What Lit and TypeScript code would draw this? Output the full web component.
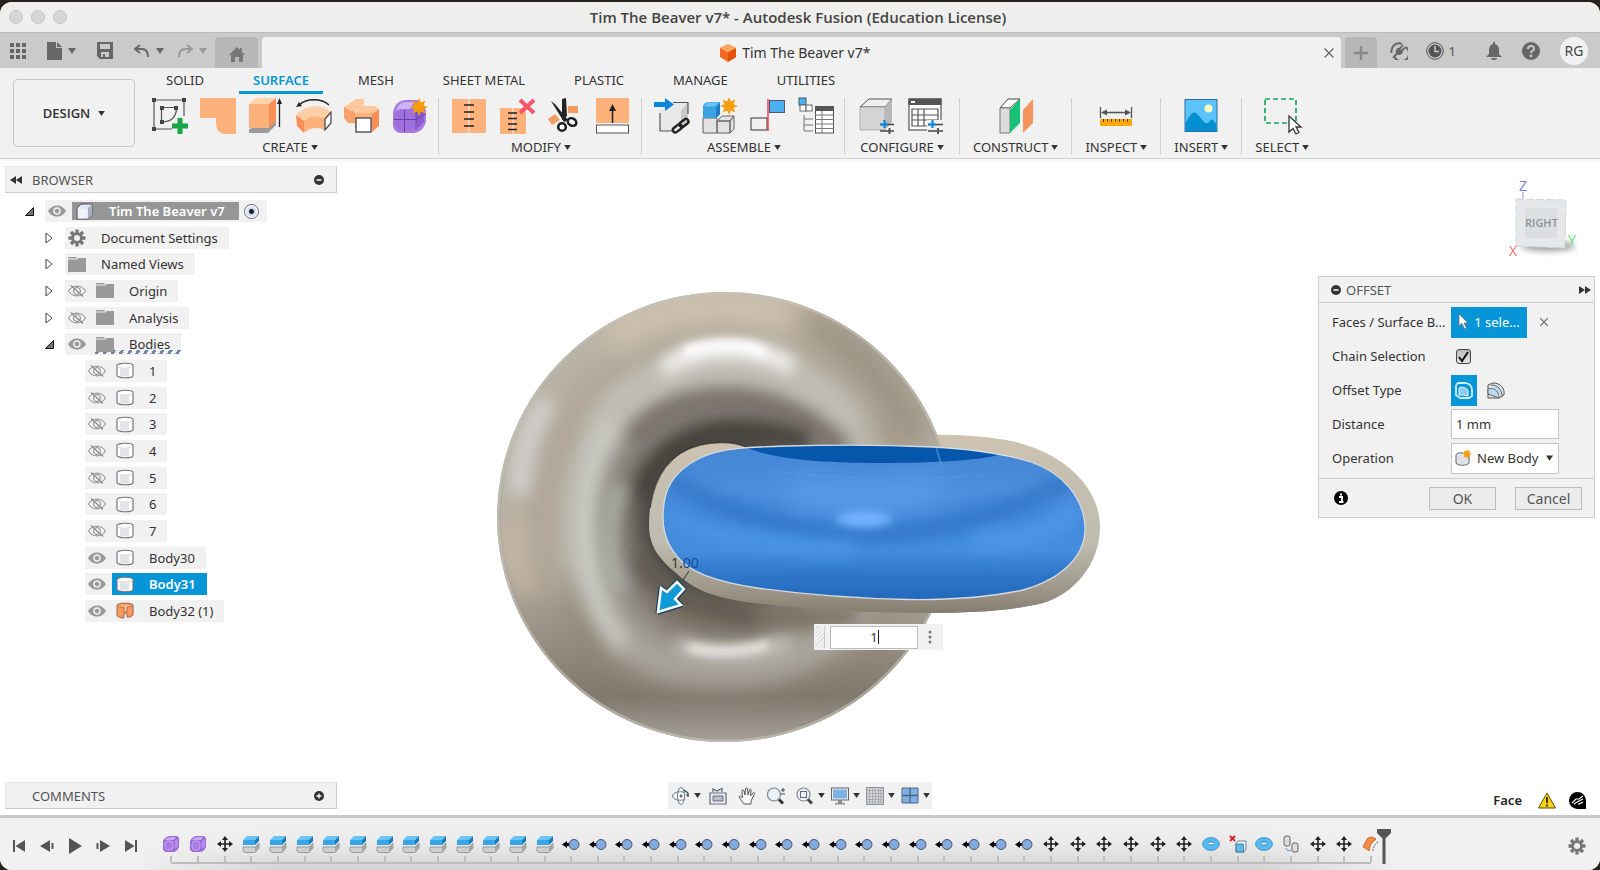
import { LitElement, html, css, nothing, type TemplateResult } from "lit";
import { customElement, property, state } from "lit/decorators.js";
import { classMap } from "lit/directives/class-map.js";

const caret = html`<svg class="caret" viewBox="0 0 8 6" width="8" height="6" aria-hidden="true"><path d="M0 0H8L4 6Z" fill="currentColor" /></svg>`;

/* ---------- ribbon icons, 36 x 36 ---------- */
const star = "M0-9 1.8-4.4 6.4-6.4 4.4-1.8 9 0 4.4 1.8 6.4 6.4 1.8 4.4 0 9-1.8 4.4-6.4 6.4-4.4 1.8-9 0-4.4-1.8-6.4-6.4-1.8-4.4Z";

const ribbonIcons: Record<string, TemplateResult> = {
  sketch: html`<svg viewBox="0 0 36 36"><g fill="none" stroke="#555" stroke-width="1.2"><path d="M4 2H30M2 4V29M4 31H20M32 4V18M12 9.500H23M9.500 12V22M12 24C20 23 24 19 24.500 11" /></g><g fill="#444"><path d="M0 0h4v4H0zM30 0h4v4h-4zM0 29h4v4H0zM8 8h4v4H8zM22 8h4v4h-4zM8 22h4v4H8z" /></g><path d="M25.500 20h5v5.500H36v5H30.500V36h-5V30.500H20v-5h5.500z" fill="#17a546" /></svg>`,
  patch: html`<svg viewBox="0 0 36 36"><path d="M0 0H36V36H26C19 36 16 31 16 25V20H0Z" fill="#fdb27c" /></svg>`,
  extrude: html`<svg viewBox="0 0 36 36"><path d="M1 31 1 35H20L28 27V23Z" fill="#9a9a9a" /><path d="M1 6 8 0H28L21 6Z" fill="#ffd3b0" /><path d="M1 6H21V30H1Z" fill="#fdb27c" /><path d="M21 6 28 0V23L21 30Z" fill="#f98f57" /><path d="M31.500 5V29" stroke="#222" stroke-width="1.300" /><path d="M31.500 0 34 6H29Z" fill="#222" /></svg>`,
  revolve: html`<svg viewBox="0 0 36 36"><path d="M3 7C11 0 25 0 33 7" fill="none" stroke="#222" stroke-width="1.400" /><path d="M0 9 3 4 6 8Z" fill="#222" /><path d="M0 17C10 6 26 6 35 14L29 21C22 17 13 17 8 23Z" fill="#ffcfa6" /><path d="M0 17 8 23V35L1 28Z" fill="#f98f57" /><path d="M8 23C13 17 22 17 29 21V32C21 29 14 29 8 35Z" fill="#fdb27c" /><path d="M29 21 35 14V25L29 32Z" fill="#fff" stroke="#444" stroke-width="1.200" /></svg>`,
  sweep: html`<svg viewBox="0 0 36 36"><path d="M0 9 7 9 11 14V25H4L0 20Z" fill="#f9a16a" /><path d="M0 9 12 1H20V7L12 13H6Z" fill="#ffc79c" /><path d="M12 14 18 8H31L35 11 28 16H12Z" fill="#ffc79c" /><path d="M11 15H28V30H11Z" fill="#fdb27c" /><path d="M28 16 35 11V28L28 34Z" fill="#f98f57" /><rect x="12" y="20" width="15" height="14" fill="#fff" stroke="#444" stroke-width="1.300" /></svg>`,
  form: html`<svg viewBox="0 0 36 36"><path d="M1 15C2 7 7 2 14 2H24C30 3 34 9 34 15V23C33 30 27 35 22 35H8C3 34 1 31 1 26Z" fill="#a77ae0" /><path d="M4 13C6 7 9 4 14 4H22L18 11H8Z" fill="#cfb1f5" /><path d="M23 13 32 10V24L25 31Z" fill="#8a5cd0" /><rect x="3" y="12" width="20" height="20" rx="5" fill="#9d70dc" /><path d="M12.500 12V34M2 21.500H24L34 16M24 13V32" stroke="#6b3fae" stroke-width="1" fill="none" /><path d="${star}" transform="translate(27 9)" fill="#f79d0a" /></svg>`,
  stitch: html`<svg viewBox="0 0 36 36"><path d="M1 1H17.500V35H1zM18.500 1H35V35H18.500z" fill="#fdb27c" /><path d="M13 7H23M13 14H23M13 21H23M13 28H23" stroke="#222" stroke-width="1.600" /></svg>`,
  unstitch: html`<svg viewBox="0 0 36 36"><path d="M1 10H13.500V36H1zM14.500 10H27V36H14.500z" fill="#fdb27c" /><path d="M9 15H18M9 20.500H18M9 26H18M9 31.500H18" stroke="#222" stroke-width="1.600" /><path d="M21 2 35 15M35 2 21 15" stroke="#f5566a" stroke-width="4" /></svg>`,
  trim: html`<svg viewBox="0 0 36 36"><path d="M21 8H31V15H21zM1 21 8 16 13 22 5 27Z" fill="#f49a63" /><path d="M4 3 8 6 21 22 17 24ZM15 1 19 0 20 18 15 22Z" fill="#222" /><circle cx="15" cy="29" r="3.800" fill="#fff" stroke="#222" stroke-width="2.600" /><ellipse cx="25" cy="24" rx="4.500" ry="3.500" fill="#fff" stroke="#222" stroke-width="2.600" transform="rotate(30 25 24)" /></svg>`,
  extend: html`<svg viewBox="0 0 36 36"><rect x="1" y="0" width="33" height="25" fill="#fdb27c" /><rect x="1.500" y="27" width="32" height="8" fill="#fff" stroke="#555" /><path d="M17.500 10V25" stroke="#222" stroke-width="1.500" /><path d="M17.500 6 21 13H14Z" fill="#222" /></svg>`,
  derive: html`<svg viewBox="0 0 36 36"><path d="M6 13 15 4H34V24L27 33H6Z" fill="#e9e9e9" /><path d="M27 13 34 4V24L27 33Z" fill="#c9c9c9" /><path d="M6 15V33H18M19 4.500H34V16" fill="none" stroke="#555" stroke-width="1.200" /><path d="M0 4H11V0L20 6.500 11 13V9H0Z" fill="#0a86dd" /><g fill="none" stroke="#222" stroke-width="2.400"><rect x="18" y="28" width="10" height="5" rx="2.500" transform="rotate(-38 23 30)" /><rect x="25" y="22.500" width="10" height="5" rx="2.500" transform="rotate(-38 30 25)" /></g></svg>`,
  component: html`<svg viewBox="0 0 36 36"><path d="M1 20H15V35H1zM15 23H28V35H15zM15 23 20 18H32L28 23ZM28 23 32 18V31L28 35Z" fill="#e2e2e2" stroke="#666" stroke-width="1" /><path d="M1 8C2 5 4 4 7 4H18V16L14 20H1Z" fill="#3ba2e2" /><path d="M2 8C4 5 5 4.500 8 4.500H17L13 8.500H2Z" fill="#6cc0f2" /><path d="M14 9 18 5V16L14 20Z" fill="#1b7fc4" /><path d="${star}" transform="translate(27 8)" fill="#f79d0a" /></svg>`,
  joint: html`<svg viewBox="0 0 36 36"><rect x="1" y="20" width="16" height="12" fill="none" stroke="#555" stroke-width="1.200" /><rect x="19.500" y="2.500" width="15" height="12" fill="#4bb0ee" stroke="#557" /><path d="M18 1V33" stroke="#e43a4a" stroke-width="1.400" /></svg>`,
  bom: html`<svg viewBox="0 0 36 36"><rect x="1" y="0" width="7" height="7" fill="#4bb0ee" stroke="#456" /><rect x="2" y="7" width="6" height="6" fill="#fff" stroke="#666" /><rect x="8" y="7" width="6" height="6" fill="#fff" stroke="#666" /><path d="M6 17V33M6 21H15M6 27H15M6 33H15" stroke="#777" fill="none" /><rect x="17.500" y="9" width="18" height="26" fill="#fff" stroke="#555" /><path d="M17 8H36V13H17z" fill="#555" /><path d="M17 17H36M17 21.500H36M17 26H36M17 30.500H36M24 13V35" stroke="#777" /></svg>`,
  configure: html`<svg viewBox="0 0 36 36"><path d="M0 9 9 1H32L25 9Z" fill="#efefef" stroke="#555" /><path d="M0 9H25V32H0Z" fill="#d5d5d5" stroke="#888" stroke-width=".6" /><path d="M25 9 32 1V24L25 32Z" fill="#b9b9b9" /><path d="M20 26.500H34M20 33H34" stroke="#444" stroke-width="1.600" /><path d="M24.500 22V30M20 26.500H28" stroke="#0a86dd" stroke-width="2.200" /><path d="M29.500 30V36" stroke="#555" stroke-width="2" /></svg>`,
  table: html`<svg viewBox="0 0 36 36"><rect x="1" y="1" width="32" height="31" fill="#fff" stroke="#555" stroke-width="1.200" /><path d="M.500.500H33.500V7H.500z" fill="#555" /><path d="M3 3H7V5H3z" fill="#fff" /><path d="M4 11H30V28H4zM4 17H30M4 22H30M10 11V28M16 11V28" fill="none" stroke="#555" stroke-width="1.200" /><path d="M19 22H36V36H19z" fill="#f1f1f1" /><path d="M20 26.500H35M20 33H35" stroke="#444" stroke-width="1.600" /><path d="M24.500 22V30M20 26.500H28" stroke="#0a86dd" stroke-width="2.200" /><path d="M30 30V36" stroke="#555" stroke-width="2" /></svg>`,
  plane: html`<svg viewBox="0 0 36 36"><path d="M2 10 10 1H22L12 10Z" fill="#fff" stroke="#444" /><path d="M2 10H12V35H2Z" fill="#dcdcdc" stroke="#777" /><path d="M12 12 22 1V25L12 35Z" fill="#16c275" /><path d="M25 12 35 1V25L25 35Z" fill="#f4945a" /></svg>`,
  measure: html`<svg viewBox="0 0 36 36"><path d="M2.500 9V20M33.500 9V20M5 14.500H31" stroke="#555" stroke-width="1.300" /><path d="M3 14.500 9 11.500V17.500ZM33 14.500 27 11.500V17.500Z" fill="#555" /><rect x="2" y="21" width="32" height="7" fill="#fba70c" /><path d="M5.500 21V24M9.500 21V23.500M13.500 21V24M17.500 21V23.500M21.500 21V24M25.500 21V23.500M29.500 21V24" stroke="#5b3b00" /></svg>`,
  insert: html`<svg viewBox="0 0 36 36"><rect x="2" y="1.500" width="32" height="32" fill="#5cc3fa" stroke="#2a6fa0" /><path d="M2.500 25C7 17 10 13 13 15 17 18 20 24 23 25 27 26 27 20 30 22L33.500 26V33H2.500Z" fill="#0290d2" /><circle cx="25.500" cy="10.500" r="4" fill="#fdf7c0" /></svg>`,
  select: html`<svg viewBox="0 0 36 36"><rect x="1" y="1" width="31" height="24" fill="none" stroke="#17a558" stroke-width="1.700" stroke-dasharray="5 3" /><path d="M25 18V34L29 30.500 32 36 35 34.500 32 29H37Z" fill="#fff" stroke="#333" stroke-width="1.300" /></svg>`,
};

const ribbonGroups = [
  { label: "CREATE", icons: ["sketch", "patch", "extrude", "revolve", "sweep", "form"] },
  { label: "MODIFY", icons: ["stitch", "unstitch", "trim", "extend"] },
  { label: "ASSEMBLE", icons: ["derive", "component", "joint", "bom"] },
  { label: "CONFIGURE", icons: ["configure", "table"] },
  { label: "CONSTRUCT", icons: ["plane"] },
  { label: "INSPECT", icons: ["measure"] },
  { label: "INSERT", icons: ["insert"] },
  { label: "SELECT", icons: ["select"] },
];
const workspaceTabs = ["SOLID", "SURFACE", "MESH", "SHEET METAL", "PLASTIC", "MANAGE", "UTILITIES"];

/* ---------- small shared icons ---------- */
const eyeIcon = html`<svg viewBox="0 0 18 12" width="18" height="12"><path d="M0 6C4-1.500 14-1.500 18 6 14 13.500 4 13.500 0 6Z" fill="#999" /><circle cx="9" cy="6" r="3" fill="none" stroke="#f1f1f1" stroke-width="1.500" /></svg>`;
const hiddenIcon = html`<svg viewBox="0 0 18 12" width="18" height="12"><g fill="none" stroke="#888"><path d="M.500 6C4-.500 14-.500 17.500 6 14 12.500 4 12.500.500 6Z" /><circle cx="9" cy="6" r="3.500" /><path d="M3 .500 15 11.500" stroke-width="1.200" /></g></svg>`;
const gearIcon = html`<svg viewBox="-9 -9 18 18" width="18" height="18"><g fill="#777"><circle r="5.800" /><path d="M-1.700-8.500H1.700V8.500H-1.700zM-8.500-1.700V1.700H8.500V-1.700z" /><path d="M-1.700-8.500H1.700V8.500H-1.700zM-8.500-1.700V1.700H8.500V-1.700z" transform="rotate(45)" /></g><circle r="3" fill="#f1f1f1" /></svg>`;
const folderIcon = html`<svg viewBox="0 0 18 15" width="18" height="15"><path d="M0 0H8L9.500 1.500H0zM0 2.500H9L11 1H18V15H0Z" fill="#999" /></svg>`;
const bodyIcon = html`<svg viewBox="0 0 18 17" width="18" height="17"><path d="M1 3.500C1 .500 17 .500 17 3.500V13.500C17 16.500 1 16.500 1 13.500Z" fill="#fff" stroke="#777" stroke-width="1.200" /><path d="M4 6H13V14.500H6C4 14 4 13 4 12Z" fill="#e3e4e8" /><path d="M1.500 4.500C4 6.500 14 6.500 16.500 4.500" fill="none" stroke="#ddd" /></svg>`;
const surfaceIcon = html`<svg viewBox="0 0 18 17" width="18" height="17"><path d="M1 3C1 .500 17 .500 17 3V13C15 15 13 15.500 11 15V11H8V16C5 16 2 15 1 13.500Z" fill="#fa9a63" stroke="#a9603a" /><path d="M2 3.500C5 6 8 5 8 5V10H11V5C13 5 15 4.500 16 3.500" fill="#ffc8a0" stroke="#a9603a" stroke-width=".8" /></svg>`;
const cubeIcon = html`<svg viewBox="0 0 17 17" width="17" height="17"><path d="M1 5 5 1H16V12L12 16H1Z" fill="#dfe5f2" stroke="#555" stroke-width="1" stroke-linejoin="round" /><path d="M12 5 16 1V12L12 16Z" fill="#aab0c0" /><path d="M2 5.500H11.500V15.500H2z" fill="#eef2fb" /></svg>`;
const closedArrow = html`<svg viewBox="0 0 8 12" width="8" height="12"><path d="M1 1V11L7 6Z" fill="#fff" stroke="#444" stroke-linejoin="round" /></svg>`;
const openArrow = html`<svg viewBox="0 0 9 9" width="9" height="9"><path d="M8.500.500V8.500H.500Z" fill="#777" stroke="#111" stroke-linejoin="round" /></svg>`;

/* ---------- timeline icons ---------- */
const timelineIcons: Record<string, TemplateResult> = {
  form: html`<svg viewBox="0 0 18 18" width="18" height="18"><path d="M1 6C3 2 6 1 9 1H15C17 2 17.500 4 17 7V12C16 15 13 17 11 17H4C1 16 .500 14 1 11Z" fill="#9a6cd8" /><path d="M3 5C5 2 8 2 14 2L12 5Z" fill="#c9a9f2" /><rect x="3" y="6" width="8" height="9" rx="3" fill="#a77ae6" stroke="#c9a9f2" /><path d="M13 6 16 4V11L13 14Z" fill="#b58fea" /></svg>`,
  move: html`<svg viewBox="0 0 18 18" width="18" height="18"><path d="M9 3V15M3 9H15" stroke="#222" stroke-width="1.600" /><path d="M9 1 12 5H6zM9 17 12 13H6zM1 9 5 6V12zM17 9 13 6V12z" fill="#222" /></svg>`,
  extrude: html`<svg viewBox="0 0 18 18" width="18" height="18"><path d="M1 5 5 1H17L13 5Z" fill="#6cc4f5" /><path d="M1 5H13V10H1z" fill="#38a6e6" /><path d="M13 5 17 1V6L13 10Z" fill="#1779b8" /><path d="M1 12H13L17 8V13L13 17.500H3L1 16Z" fill="#cfcfcf" stroke="#8a8a8a" stroke-width=".8" /><path d="M13 12 17 8V13L13 17.500Z" fill="#a5a5a5" /></svg>`,
  joint: html`<svg viewBox="0 0 18 18" width="18" height="18"><path d="M0 9.500 5 6V8H9V11H5V13Z" fill="#000" /><circle cx="12" cy="9.500" r="5" fill="#82abe0" stroke="#445" stroke-width=".9" /></svg>`,
  torus: html`<svg viewBox="0 0 18 18" width="18" height="18"><ellipse cx="9" cy="9" rx="8.400" ry="6.400" fill="#55b9f2" stroke="#2f88c4" stroke-width=".8" /><ellipse cx="9" cy="8.500" rx="3.200" ry="1.600" fill="#fff" stroke="#2f88c4" /></svg>`,
  remove: html`<svg viewBox="0 0 18 18" width="18" height="18"><path d="M7 8 9 6H17V14L15 17H7Z" fill="#e5f4fb" stroke="#4b6b7c" stroke-width=".8" /><path d="M7 9H14.500V17H7z" fill="#5bb9ec" stroke="#4b6b7c" stroke-width=".8" /><path d="M1 1 6 6M6 1 1 6" stroke="#d8232a" stroke-width="2" /></svg>`,
  copy: html`<svg viewBox="0 0 18 18" width="18" height="18"><rect x="2" y="1" width="6" height="10" rx="2" fill="#ddd" stroke="#666" /><rect x="10" y="8" width="6" height="9" rx="2" fill="#ddd" stroke="#666" /><path d="M4 13C5 16 7 16 9 15" fill="none" stroke="#4b88d0" /></svg>`,
  offset: html`<svg viewBox="0 0 18 18" width="18" height="18"><path d="M1 12 5 4C8 1 11 2 14 4L10 8C8 10 8 12 7 16 5 14 3 13 1 12Z" fill="#f58b45" stroke="#b85d21" stroke-width=".8" /><path d="M11 16C11 12 13 9 17 6" stroke="#888" fill="none" stroke-width="1.200" stroke-dasharray="2 1" /></svg>`,
};
const repeat = (kind: string, count: number) => Array<string>(count).fill(kind);
const features = [
  ...repeat("form", 2), "move", ...repeat("extrude", 12), ...repeat("joint", 18), ...repeat("move", 6),
  "torus", "remove", "torus", "copy", "move", "move", "offset",
];

const resets = css`
  * { box-sizing: border-box; }
  button, input, select { font: inherit; color: inherit; margin: 0; padding: 0; border: 0; background: none; border-radius: 0; }
  button { display: inline-flex; align-items: center; justify-content: center; }
  ul, ol { list-style: none; margin: 0; padding: 0; }
  svg { display: block; flex: none; }
`;

/* ================= title and document bar ================= */
@customElement("document-bar")
class DocumentBar extends LitElement {
  static styles = [resets, css`
    :host { display: block; }
    .title { display: grid; grid-template-columns: 1fr auto 1fr; align-items: center; height: 30px; padding: 0 13px 0 9px; background: #efefed; }
    .title h1 { margin: 0; font: 600 15px/20px "Open Sans", sans-serif; color: #444; }
    .lights { display: flex; gap: 8px; }
    .light { width: 14px; height: 14px; border-radius: 50%; background: #d6d6d4; border: 1px solid #c4c4c2; }
    .bar { display: flex; align-items: stretch; height: 36px; background: #cacaca; border-top: 1px solid #b9b9b9; color: #666; }
    .tools { display: flex; align-items: center; padding-left: 10px; width: 215px; }
    .tools button { gap: 6px; height: 28px; }
    .grid { width: 16px; margin-right: 21px; }
    .doc { margin-right: 21px; }
    .save { margin-right: 21px; }
    .undo { margin-right: 13px; }
    .tools .redo { color: #999; }
    .home { width: 43px; margin-top: 4px; padding-top: 3px; background: #b7b7b7; border-radius: 4px 4px 0 0; margin-right: 4px; color: #777; }
    .tab { flex: 1; display: flex; align-items: center; background: #f1f1f1; border-radius: 4px 4px 0 0; margin-top: 4px; padding-right: 6px; }
    .name { flex: 1; display: flex; align-items: center; justify-content: center; gap: 6px; font-size: 14px; color: #333; padding-left: 6px; }
    .close { width: 12px; height: 20px; }
    .add { width: 32px; margin: 4px 13px 0 4px; background: #b7b7b7; border-radius: 4px 4px 0 0; }
    .account { display: flex; align-items: center; padding-right: 12px; }
    .jobs { gap: 5px; margin: 0 30px 0 18px; font-size: 13px; color: #555; }
    .bell { margin-right: 20px; }
    .help { margin-right: 20px; }
    .account .avatar { width: 28px; height: 28px; border-radius: 50%; background: #f1f1f1; font-size: 14px; color: #444; }
  `];
  render() {
    return html`
      <div class="title">
        <div class="lights"><span class="light"></span><span class="light"></span><span class="light"></span></div>
        <h1>Tim The Beaver v7* - Autodesk Fusion (Education License)</h1>
      </div>
      <div class="bar">
        <div class="tools">
          <button class="grid" aria-label="Data panel"><svg viewBox="0 0 16 16" width="16" height="16"><path d="M0 0h4v4H0zM6 0h4v4H6zM12 0h4v4h-4zM0 6h4v4H0zM6 6h4v4H6zM12 6h4v4h-4zM0 12h4v4H0zM6 12h4v4H6zM12 12h4v4h-4z" fill="currentColor" /></svg></button>
          <button class="doc" aria-label="File"><svg viewBox="0 0 15 18" width="15" height="18"><path d="M0 0H9V6H15V18H0zM10 0 15 5H10z" fill="currentColor" /></svg>${caret}</button>
          <button class="save" aria-label="Save"><svg viewBox="0 0 16 17" width="16" height="17"><path d="M0 0H16V17H3L0 14zM3 2V7H13V2zM4 10V15H6V12H8V15H12V10z" fill="currentColor" fill-rule="evenodd" /></svg></button>
          <button class="undo" aria-label="Undo"><svg viewBox="0 0 16 14" width="16" height="14"><path d="M6 1 1 5 6 9M1 5H8C12 5 14 8 14 13" fill="none" stroke="currentColor" stroke-width="2" /></svg>${caret}</button>
          <button class="redo" aria-label="Redo"><svg viewBox="0 0 16 14" width="16" height="14"><path d="M10 1 15 5 10 9M15 5H8C4 5 2 8 2 13" fill="none" stroke="currentColor" stroke-width="2" /></svg>${caret}</button>
        </div>
        <button class="home" aria-label="Home"><svg viewBox="0 0 16 15" width="16" height="15"><path d="M8 0 11 3V1H13V5L16 8H14V15H10V10H6V15H2V8H0Z" fill="currentColor" /></svg></button>
        <div class="tab">
          <div class="name"><svg viewBox="0 0 16 18" width="16" height="18"><path d="M8 0 16 4V13L8 18 0 13V4Z" fill="#f26a21" /><path d="M8 0 16 4 8 8.500 0 4Z" fill="#ffa665" /><path d="M8 8.500 16 4V13L8 18Z" fill="#e2530a" /></svg>Tim The Beaver v7*</div>
          <button class="close" aria-label="Close tab"><svg viewBox="0 0 10 10" width="10" height="10"><path d="M.500.500 9.500 9.500M9.500.500.500 9.500" stroke="#666" stroke-width="1.300" /></svg></button>
        </div>
        <button class="add" aria-label="New tab"><svg viewBox="0 0 14 14" width="14" height="14"><path d="M7 0V14M0 7H14" stroke="#888" stroke-width="2.500" /></svg></button>
        <div class="account">
          <button aria-label="Extensions"><svg viewBox="0 0 18 18" width="18" height="18"><path d="M4.500 15A7.700 7.700 0 1 0 15.500 5M12 1.900A7.700 7.700 0 0 0 1.700 11" fill="none" stroke="currentColor" stroke-width="2" /><path d="M2 15.500 6 11C5 8 7 6 9 5.500L13 10C12 12.500 10 13.500 7.500 12.500L4 16Z" fill="currentColor" /><path d="M9.500 7 13 3M11.500 9 15 5.500" stroke="currentColor" stroke-width="1.800" /></svg></button>
          <button class="jobs" aria-label="Job status"><svg viewBox="0 0 18 18" width="18" height="18"><circle cx="9" cy="9" r="8.300" fill="none" stroke="currentColor" /><circle cx="9" cy="9" r="6.500" fill="currentColor" /><path d="M9 4V9.500H13" fill="none" stroke="#cacaca" stroke-width="1.500" /></svg>1</button>
          <button class="bell" aria-label="Notifications"><svg viewBox="0 0 16 18" width="16" height="18"><path d="M7 0H9V2C12 3 13 5 13 8V12L16 15H0L3 12V8C3 5 4 3 7 2zM5 16H11C11 17 10 18 8 18S5 17 5 16z" fill="currentColor" /></svg></button>
          <button class="help" aria-label="Help"><svg viewBox="0 0 18 18" width="18" height="18"><circle cx="9" cy="9" r="9" fill="currentColor" /><path d="M6 7C6 3 12 3 12 6.500 12 9 9 8.500 9 11" fill="none" stroke="#cacaca" stroke-width="2" /><circle cx="9" cy="14" r="1.400" fill="#cacaca" /></svg></button>
          <button class="avatar">RG</button>
        </div>
      </div>`;
  }
}

/* ================= ribbon ================= */
@customElement("tool-ribbon")
class ToolRibbon extends LitElement {
  @state() active = "SURFACE";
  static styles = [resets, css`
    :host { display: flex; gap: 17px; background: #f1f1f1; border-bottom: 1px solid #d6d6d6; padding: 0 13px; height: 91px; font-size: 13px; color: #333; }
    .design { width: 122px; height: 68px; margin-top: 11px; gap: 8px; font: 600 13px/18px "Open Sans", sans-serif; border: 1px solid #c8c8c8; border-radius: 4px; }
    .caret { width: 7px; height: 5px; }
    .tabs { display: flex; gap: 21px; height: 26px; }
    .tabs button { padding: 0 14px; height: 26px; border-bottom: 3px solid transparent; white-space: nowrap; }
    .tabs .active { color: #0696d7; border-color: #0696d7; font-weight: 600; }
    .groups { display: flex; margin-top: 4px; }
    .group { display: flex; flex-direction: column; align-items: center; padding: 0 13px; border-right: 1px solid #cfcfcf; height: 57px; }
    .group.duo { padding: 0 15px; }
    .group.wide { padding: 0 10px 0 12px; }
    .group:first-child { padding-left: 0; }
    .group:last-child { border: 0; }
    .icons { display: flex; gap: 12px; }
    .icons button, .icons svg { width: 36px; height: 36px; overflow: visible; }
    .label { gap: 3px; height: 20px; margin-top: 4px; }
  `];
  render() {
    return html`
      <button class="design">DESIGN ${caret}</button>
      <div>
        <nav class="tabs">${workspaceTabs.map((t) => html`<button class=${classMap({ active: t === this.active })} @click=${() => (this.active = t)}>${t}</button>`)}</nav>
        <div class="groups">
          ${ribbonGroups.map((g) => html`
            <div class=${classMap({ group: true, wide: g.icons.length > 3, duo: g.icons.length === 2 })}>
              <div class="icons">${g.icons.map((i) => html`<button aria-label=${i}>${ribbonIcons[i]}</button>`)}</div>
              <button class="label">${g.label}${caret}</button>
            </div>`)}
        </div>
      </div>`;
  }
}

/* ================= browser tree ================= */
type Node = { name: string; level: 0 | 1 | 2; icon: TemplateResult; eye?: "on" | "off"; arrow?: "open" | "closed"; mark?: "root" | "selected" | "updated" };
const tree: Node[] = [
  { name: "Tim The Beaver v7", level: 0, icon: cubeIcon, eye: "on", arrow: "open", mark: "root" },
  { name: "Document Settings", level: 1, icon: gearIcon, arrow: "closed" },
  { name: "Named Views", level: 1, icon: folderIcon, arrow: "closed" },
  { name: "Origin", level: 1, icon: folderIcon, eye: "off", arrow: "closed" },
  { name: "Analysis", level: 1, icon: folderIcon, eye: "off", arrow: "closed" },
  { name: "Bodies", level: 1, icon: folderIcon, eye: "on", arrow: "open", mark: "updated" },
  ...["1", "2", "3", "4", "5", "6", "7"].map((name): Node => ({ name, level: 2, icon: bodyIcon, eye: "off" })),
  { name: "Body30", level: 2, icon: bodyIcon, eye: "on" },
  { name: "Body31", level: 2, icon: bodyIcon, eye: "on", mark: "selected" },
  { name: "Body32 (1)", level: 2, icon: surfaceIcon, eye: "on" },
];

@customElement("model-browser")
class ModelBrowser extends LitElement {
  static styles = [resets, css`
    :host { display: flex; flex-direction: column; width: 332px; padding-top: 3px; font-size: 13px; color: #333; }
    .head { display: flex; align-items: center; height: 27px; padding: 0 12px 0 4px; background: #f1f1f1; border: 1px solid #ccc; border-top-color: #e6e6e6; border-left-color: #e6e6e6; color: #555; }
    .head h2 { flex: 1; margin: 0; font-size: 13px; font-weight: 400; }
    .head .fold { width: 22px; justify-content: flex-start; }
    .head .gap { width: 22px; }
    .gap { width: 20px; }
    .tree { display: flex; flex-direction: column; justify-content: space-between; height: 422px; margin-top: 7px; }
    .row { display: flex; align-items: center; height: 22px; }
    .arrow { display: flex; justify-content: center; width: 8px; margin-right: 12px; }
    .level0 { padding-left: 20px; }
    .level1 { padding-left: 40px; }
    .level2 { padding-left: 60px; }
    .item { display: flex; align-items: center; height: 22px; background: #f1f1f1; }
    .eye { justify-content: flex-start; width: 27px; padding-left: 3px; height: 22px; }
    .node { display: flex; align-items: center; height: 22px; padding: 0 11px 0 3px; color: #333; text-decoration: none; }
    .eye + .node { padding-left: 4px; }
    .icon { display: flex; width: 18px; margin-right: 15px; }
    .node.root { height: 18px; background: #969696; color: #fff; font-weight: 600; padding-right: 14px; }
    .selected { background: #0696d7; color: #fff; font-weight: 600; }
    .updated { background: repeating-linear-gradient(120deg, transparent 0 4px, #6e86ac 4px 7px) 0 calc(100% - 1px) / 100% 4px no-repeat; }
    .dot { width: 15px; height: 15px; margin: 0 8px 0 5px; appearance: none; border: 1px solid #667; border-radius: 50%; background: radial-gradient(#222 0 2px, #cfdcf0 3px 4px, #fff 6px); }
    .comments { margin-top: auto; }
  `];
  render() {
    return html`
      <div class="head">
        <button class="fold" aria-label="Collapse"><svg viewBox="0 0 12 8" width="12" height="8"><path d="M6 0V8L0 4ZM12 0V8L6 4Z" fill="#333" /></svg></button>
        <h2>BROWSER</h2>
        <button aria-label="Hide"><svg viewBox="0 0 10 10" width="10" height="10"><circle cx="5" cy="5" r="5" fill="#333" /><path d="M2.500 5H7.500" stroke="#fff" stroke-width="1.500" /></svg></button>
      </div>
      <ul class="tree">
        ${tree.map((n) => html`
          <li class="row level${n.level}">
            ${n.arrow ? html`<span class="arrow">${n.arrow === "open" ? openArrow : closedArrow}</span>` : html`<span class="gap"></span>`}
            <div class="item">
              ${n.eye ? html`<button class="eye" aria-label="Visibility">${n.eye === "on" ? eyeIcon : hiddenIcon}</button>` : nothing}
              <a class="node ${n.mark ?? ""}" href="#${n.name}"><span class="icon">${n.icon}</span>${n.name}</a>
              ${n.mark === "root" ? html`<input class="dot" type="radio" checked aria-label="Activate component" />` : nothing}
            </div>
          </li>`)}
      </ul>
      <div class="head comments">
        <span class="gap"></span>
        <h2>COMMENTS</h2>
        <button aria-label="Add comment"><svg viewBox="0 0 10 10" width="10" height="10"><circle cx="5" cy="5" r="5" fill="#333" /><path d="M2.500 5H7.500M5 2.500V7.500" stroke="#fff" stroke-width="1.300" /></svg></button>
      </div>`;
  }
}

/* ================= offset dialog ================= */
@customElement("offset-panel")
class OffsetPanel extends LitElement {
  static styles = [resets, css`
    :host { display: block; width: 277px; background: #f1f1f1; border: 1px solid #cfcfcf; font-size: 13px; color: #333; }
    header { display: flex; align-items: center; height: 26px; padding: 0 3px 0 12px; gap: 5px; border-bottom: 1px solid #cfcfcf; color: #555; }
    h2 { flex: 1; margin: 0; font-size: 13px; font-weight: 400; }
    .rows { display: grid; grid-template-columns: 119px 1fr; grid-auto-rows: 34px; align-items: center; padding: 2px 0 3px 13px; }
    .rows label, .cap { white-space: nowrap; }
    .line { display: flex; align-items: center; }
    .pick { width: 76px; height: 31px; gap: 6px; background: #0696d7; color: #fff; }
    .clear { width: 16px; height: 16px; margin-left: 9px; }
    .check { width: 15px; height: 15px; margin-left: 5px; appearance: none; border: 1px solid #444; border-radius: 3px; background: linear-gradient(#bbb, #e4e4e4); }
    .checkbox { display: grid; width: 22px; }
    .checkbox > * { grid-area: 1 / 1; }
    .tick { margin-left: 5px; pointer-events: none; }
    .type { width: 26px; height: 31px; }
    .type.on { background: #0696d7; }
    .type + .type { margin-left: 6px; }
    .field { width: 108px; height: 30px; padding: 0 4px; background: #fff; border: 1px solid #c4c4c4; }
    .choice { display: flex; align-items: center; width: 108px; height: 31px; padding: 0 5px 0 3px; background: #fff; border: 1px solid #c4c4c4; }
    .choice .caret { width: 7px; height: 6px; }
    select { flex: 1; min-width: 0; appearance: none; padding-left: 5px; }
    footer { display: flex; align-items: center; height: 39px; padding: 0 12px 0 15px; border-top: 1px solid #cfcfcf; }
    footer svg { margin-right: auto; }
    footer button { width: 67px; height: 23px; margin-left: 19px; border: 1px solid #bdbdbd; background: #ececec; color: #555; font-size: 14px; }
  `];
  render() {
    return html`
      <header>
        <svg viewBox="0 0 10 10" width="10" height="10"><circle cx="5" cy="5" r="5" fill="#333" /><path d="M2.500 5H7.500" stroke="#fff" stroke-width="1.500" /></svg>
        <h2>OFFSET</h2>
        <svg viewBox="0 0 12 8" width="12" height="8"><path d="M0 0V8L6 4ZM6 0V8L12 4Z" fill="#333" /></svg>
      </header>
      <div class="rows">
        <span class="cap">Faces / Surface B...</span>
        <div class="line"><button class="pick"><svg viewBox="0 0 10 16" width="10" height="16"><path d="M1 0V12L4 9.500 6.500 15 8.500 14 6 9H10Z" fill="#fff" stroke="#666" stroke-width=".7" /></svg>1 sele...</button>
          <button class="clear" aria-label="Clear selection"><svg viewBox="0 0 8 8" width="8" height="8"><path d="M0 0 8 8M8 0 0 8" stroke="#666" stroke-width="1.200" /></svg></button></div>
        <label for="chain">Chain Selection</label>
        <span class="checkbox"><input class="check" id="chain" type="checkbox" checked /><svg class="tick" viewBox="0 0 15 15" width="15" height="15"><path d="M3 8 6 12 12 3" fill="none" stroke="#111" stroke-width="2" /></svg></span>
        <span class="cap">Offset Type</span>
        <div class="line">
          <button class="type on" aria-label="Sharp corners"><svg viewBox="0 0 18 17" width="18" height="17"><path d="M1 3 3 1H11C15 2 17 5 17 8V14L14 16H11M1 3V13L5 16H11" fill="none" stroke="#d3ecfb" stroke-width="1.800" stroke-linejoin="round" /><path d="M4 13V6C8 4 12 6 13 9V14L8 13Z" fill="#8ecbf5" stroke="#e8f6ff" /></svg></button>
          <button class="type" aria-label="Rounded corners"><svg viewBox="0 0 18 17" width="18" height="17"><path d="M1 7V3L6 1C14 1 18 7 17 13L12 16H1Z" fill="#e2e2e2" stroke="#555" /><path d="M1 7C8 5 12 10 12 16L1 12ZM4 3C11 3 15 8 15 14" fill="#bddcf2" stroke="#555" stroke-width=".9" /></svg></button>
        </div>
        <label for="distance">Distance</label>
        <input class="field" id="distance" value="1 mm" />
        <label for="operation">Operation</label>
        <div class="choice"><svg viewBox="0 0 17 18" width="17" height="18"><path d="M1 6C1 3 13 3 14 6V14C13 17 2 17 1 14Z" fill="#dfe2e6" stroke="#666" /><path d="M8-5H20V6H8z" fill="#fff" opacity=".6" /><path d="${star}" transform="translate(12 5) scale(.55)" fill="#f79d0a" /></svg>
          <select id="operation"><option>New Body</option></select>${caret}</div>
      </div>
      <footer>
        <svg viewBox="0 0 14 14" width="14" height="14"><circle cx="7" cy="7" r="7" fill="#000" /><path d="M5 6H8V10.500M5 11H9.500M6 3.500H8" stroke="#fff" stroke-width="1.800" fill="none" /></svg>
        <button>OK</button><button>Cancel</button>
      </footer>`;
  }
}

/* ================= 3D canvas ================= */
const sectionFace = "M663 517C663 490 672 472 700 458 720 448 750 447 786 446 835 444.500 890 445 933 447 970 449 1005 454 1031 462 1063 473 1085 499 1085 529 1085 556 1062 579 1023 590 985 598 945 600 908 599.500 855 598.500 800 594 757 588 725 583 700 576 686 565 670 552 663 536 663 517Z";

@customElement("model-canvas")
class ModelCanvas extends LitElement {
  static styles = [resets, css`
    :host { display: block; }
    .scene { width: 100%; height: 100%; }
    .value { font: 14px "Noto Sans", sans-serif; fill: #3d3a36; }
    .inside { fill: #144f94; }
  `];
  render() {
    return html`
      <svg class="scene" viewBox="0 161 1600 654" aria-label="Model view">
        <defs>
          <radialGradient id="ring" gradientUnits="userSpaceOnUse" cx="725" cy="517" r="227" fx="725" fy="517">
            <stop offset="0" stop-color="#45423d" /><stop offset=".33" stop-color="#4b4843" />
            <stop offset=".42" stop-color="#716d66" /><stop offset=".52" stop-color="#908c84" />
            <stop offset=".62" stop-color="#b4b2a9" /><stop offset=".7" stop-color="#b9b5ab" />
            <stop offset=".8" stop-color="#b0a799" /><stop offset=".93" stop-color="#bab1a3" />
            <stop offset=".98" stop-color="#b9b3a7" /><stop offset="1" stop-color="#a8a297" />
          </radialGradient>
          <linearGradient id="low" gradientUnits="userSpaceOnUse" x1="0" y1="560" x2="0" y2="742"><stop offset="0" stop-color="#6f665b" stop-opacity="0" /><stop offset=".75" stop-color="#776e64" stop-opacity=".85" /><stop offset="1" stop-color="#a09c93" stop-opacity=".8" /></linearGradient>
          <linearGradient id="rim" gradientUnits="userSpaceOnUse" x1="0" y1="435" x2="0" y2="613"><stop offset="0" stop-color="#cfc3b0" /><stop offset=".3" stop-color="#c4beb0" /><stop offset=".6" stop-color="#bfbdb0" /><stop offset=".85" stop-color="#a09a8d" /><stop offset="1" stop-color="#857d70" /></linearGradient>
          <linearGradient id="blue" gradientUnits="userSpaceOnUse" x1="0" y1="446" x2="0" y2="600"><stop offset="0" stop-color="#4485d4" /><stop offset=".3" stop-color="#4c8fdd" /><stop offset=".5" stop-color="#4388d8" /><stop offset=".68" stop-color="#458dde" /><stop offset=".84" stop-color="#2f75c8" /><stop offset="1" stop-color="#2369bb" /></linearGradient>
          <filter id="b4" filterUnits="userSpaceOnUse" x="440" y="240" width="720" height="560"><feGaussianBlur stdDeviation="4" /></filter>
          <filter id="b8" filterUnits="userSpaceOnUse" x="440" y="240" width="720" height="560"><feGaussianBlur stdDeviation="8" /></filter>
          <filter id="b14" filterUnits="userSpaceOnUse" x="440" y="240" width="720" height="560"><feGaussianBlur stdDeviation="14" /></filter>
          <clipPath id="disc"><ellipse cx="725" cy="517" rx="228" ry="225" /></clipPath>
          <clipPath id="face"><path d=${sectionFace} /></clipPath>
        </defs>
        <path d="M925 435C965 434 1000 438 1019 443 1068 456 1100 490 1100 527 1100 565 1072 595 1043 603 1010 611 970 613 930 613L880 480Z" fill="url(#rim)" />
        <ellipse cx="725" cy="517" rx="228" ry="225" fill="url(#ring)" />
        <g clip-path="url(#disc)" fill="none" stroke-linecap="round">
          <rect x="490" y="560" width="470" height="190" fill="url(#low)" />
          <path d="M620 335C660 300 760 298 820 330" stroke="#d0c4af" stroke-width="30" filter="url(#b14)" />
          <path d="M815 325C860 350 895 390 912 430" stroke="#968e7e" stroke-width="40" opacity=".85" filter="url(#b14)" />
          <path d="M610 420C645 355 800 340 850 420" stroke="#c4c1b8" stroke-width="26" filter="url(#b14)" />
          <path d="M668 366C698 345 756 345 788 364" stroke="#fff" stroke-width="16" filter="url(#b8)" opacity=".9" />
          <path d="M688 351C712 343 742 343 762 351" stroke="#fff" stroke-width="11" filter="url(#b4)" />
          <path d="M640 435C675 392 775 388 835 445" stroke="#7b756d" stroke-width="26" filter="url(#b8)" />
          <path d="M645 490C660 442 720 418 800 440" stroke="#45423d" stroke-width="22" filter="url(#b8)" />
          <path d="M520 485C522 455 530 430 543 408" stroke="#d2d2d0" stroke-width="22" filter="url(#b8)" opacity=".9" />
          <path d="M527 585C514 565 513 545 516 530" stroke="#c2b4a0" stroke-width="20" filter="url(#b8)" opacity=".8" />
          <path d="M552 590C540 560 545 480 568 430" stroke="#b3a898" stroke-width="12" filter="url(#b8)" />
          <path d="M620 640C578 590 572 490 606 430" stroke="#c9cac3" stroke-width="20" filter="url(#b8)" />
          <path d="M618 585C606 560 607 520 618 490" stroke="#aeb0aa" stroke-width="16" filter="url(#b8)" />
          <path d="M620 640C655 670 690 672 735 671 790 669 825 645 850 625" stroke="#b9b6ad" stroke-width="22" filter="url(#b14)" />
          <path d="M662 602C700 622 780 622 850 616" stroke="#7b7065" stroke-width="18" filter="url(#b8)" />
          <path d="M680 645C708 656 755 656 785 642" stroke="#d3d0ca" stroke-width="12" filter="url(#b8)" />
          <path d="M692 648C715 653 742 652 765 645" stroke="#eeedea" stroke-width="8" filter="url(#b4)" />
          <path d="M642 560C650 590 690 608 750 616" stroke="#5c544c" stroke-width="14" filter="url(#b8)" />
          <ellipse cx="725" cy="517" rx="227" ry="224" stroke="#c9c6ba" stroke-width="3" opacity=".6" />
        </g>
        <path d="M649 525C649 482 666 454 700 445 720 440 740 443 750 449L932 447 950 470 1090 527 1043 603C1010 611 970 613 930 613 860 613 800 609 745 602 715 597 695 591 676 573 658 558 649 545 649 525Z" fill="url(#rim)" />
        <path d="M650 508C655 473 672 452 700 445 720 440 740 443 750 449" fill="none" stroke="#2b2a28" stroke-width="1.500" opacity=".7" />
        <path d=${sectionFace} fill="url(#blue)" />
        <g clip-path="url(#face)" fill="none" stroke-linecap="round">
          <path d="M650 470C720 512 790 532 866 534 950 532 1030 505 1100 465" stroke="#2c70c0" stroke-width="14" filter="url(#b8)" opacity=".85" />
          <path d="M670 520C720 535 760 545 850 548" stroke="#4f98ea" stroke-width="14" filter="url(#b8)" opacity=".8" />
          <path d="M980 542C1020 540 1050 530 1075 515" stroke="#4f9aed" stroke-width="20" filter="url(#b8)" opacity=".8" />
          <path d="M800 492C830 500 900 500 930 490" stroke="#5c9de9" stroke-width="24" filter="url(#b14)" />
          <ellipse cx="864" cy="519" rx="28" ry="8" fill="#74b2ff" filter="url(#b4)" />
          <path d="M745 447C775 460 825 463 880 463 935 463 990 460 1004 453L940 440H760Z" fill="#0656ac" />
          <path d="M770 470C820 480 930 480 985 475" stroke="#7db3f2" stroke-width="1" stroke-dasharray="5 3 1 4" opacity=".3" />
          <path d="M934 440 941 464" stroke="#6da6e6" stroke-width="2" opacity=".5" />
        </g>
        <path d=${sectionFace} fill="none" stroke="#d6dce0" stroke-width="1.300" />
        <path d="M689 571 683 580" stroke="#333" />
        <text class="value" x="671" y="568">1.<tspan class="inside">00</tspan></text>
        <path d="M658 612 661 588 667 592 677 582 684 589 675 599 681 605Z" fill="#0f9ad8" stroke="#17425e" stroke-width="5" stroke-linejoin="round" />
        <path d="M658 612 661 588 667 592 677 582 684 589 675 599 681 605Z" fill="#0f9ad8" stroke="#fff" stroke-width="2.500" />
      </svg>`;
  }
}

const navTools: { name: string; menu?: boolean; icon: TemplateResult }[] = [
  { name: "Orbit", menu: true, icon: html`<svg viewBox="0 0 18 18" width="18" height="18"><g fill="#fff" stroke="#678"><ellipse cx="9" cy="9" rx="3.500" ry="8.500" /><path d="M12.500 12.500C7 14.500.500 12 .500 9S7 3.500 12.500 5.500" fill="none" /></g><path d="M9 7.500V10.500M7.500 9H10.500M12 3 16 6V10M14 8H17" stroke="#345" stroke-width="1.200" fill="none" /></svg>` },
  { name: "Look at", icon: html`<svg viewBox="0 0 18 18" width="18" height="18"><path d="M1 6H17V17H1z" fill="#eef1f4" stroke="#667" stroke-width="1.200" /><path d="M4 9H14V14H4z" fill="#b9c2cd" stroke="#667" /><path d="M4 5V2L8 4 13 1.500V5" fill="none" stroke="#567" stroke-width="1.200" /></svg>` },
  { name: "Pan", icon: html`<svg viewBox="0 0 18 18" width="18" height="18"><path d="M6 17 1 10C1 8.500 3 9 4.500 11L4 4C4 2.500 5.500 2.500 6 4L7 8 7.500 2C8 .500 9.500.500 9.500 2L10 8 11.500 3C12 1.500 13.500 2 13 4L12.500 9 15 6C16 5 17 6 16.500 7L13 14V17Z" fill="#fff" stroke="#555" /></svg>` },
  { name: "Zoom", icon: html`<svg viewBox="0 0 18 18" width="18" height="18"><circle cx="7" cy="7.500" r="6.500" fill="#eaf2f7" stroke="#789" stroke-width="1.200" /><path d="M12 12.500 16 16.500" stroke="#333" stroke-width="3" /><path d="M14 3H18M16 1V5M14 7H18" stroke="#444" /></svg>` },
  { name: "Fit", menu: true, icon: html`<svg viewBox="0 0 18 18" width="18" height="18"><circle cx="7.500" cy="7.500" r="6.500" fill="#eaf2f7" stroke="#889" stroke-width="1.200" /><rect x="4.500" y="4.500" width="6" height="6" fill="none" stroke="#667" /><path d="M12 12.500 16 16.500" stroke="#444" stroke-width="3" /></svg>` },
  { name: "Display", menu: true, icon: html`<svg viewBox="0 0 18 18" width="18" height="18"><rect x=".500" y="1" width="17" height="12" fill="#eee" stroke="#666" /><path d="M2 2.500H16V11.500H2z" fill="#7fb0e8" /><path d="M7 13H11V16H14V17.500H4V16H7z" fill="#888" /></svg>` },
  { name: "Grid", menu: true, icon: html`<svg viewBox="0 0 18 18" width="18" height="18"><path d="M.500.500H17.500V17.500H.500z" fill="#d2d5da" stroke="#888" /><path d="M0 3.500H18M0 6.500H18M0 9.500H18M0 12.500H18M0 15H18M3.500 0V18M6.500 0V18M9.500 0V18M12.500 0V18M15 0V18" stroke="#a3a3a8" stroke-width=".8" /></svg>` },
  { name: "Viewports", menu: true, icon: html`<svg viewBox="0 0 18 18" width="18" height="18"><path d="M1 1H17V16H1z" fill="#7fb0e8" stroke="#567" /><path d="M9 1V16M1 8.500H17" stroke="#467" stroke-width="1.300" /></svg>` },
];

/* ================= timeline ================= */
@customElement("feature-timeline")
class FeatureTimeline extends LitElement {
  @property({ attribute: false }) items: string[] = features;
  static styles = [resets, css`
    :host { display: flex; align-items: flex-start; height: 55px; padding: 10px 14px 0 9px; border-top: 3px solid #c9c9c9;
      background: linear-gradient(90deg, #f1f1f1 8%, transparent 18% 78%, #f1f1f1 88%), linear-gradient(#f2f2f2, #eaeaea 50%, #d2d2d2); }
    .play { display: flex; width: 149px; gap: 8px; color: #555; padding-top: 7px; }
    .play button { width: 20px; height: 22px; }
    .track { display: flex; flex: 0 1 1226px; min-width: 0; }
    .step { flex: 1; display: flex; flex-direction: column; align-items: center; padding-top: 7px; }
    .step::before { content: ""; width: 2px; height: 6px; background: #bdbdbd; order: 2; margin-top: 3px; }
    .step::after { content: ""; order: 3; width: 100%; height: 2px; background: #bdbdbd; }
    .step:first-child::after { width: 50%; align-self: flex-end; }
    .step:last-child::after { width: 50%; align-self: flex-start; }
    .step button { order: 1; }
    .marker { margin-top: 1px; margin-left: -7px; }
    .settings { margin-left: auto; margin-top: 9px; }
  `];
  render() {
    const p = (name: string, d: string) => html`<button aria-label=${name}><svg viewBox="0 0 16 16" width="16" height="16"><path d=${d} fill="currentColor" /></svg></button>`;
    return html`
      <div class="play">
        ${p("First", "M2 2H4V14H2zM14 2V14L4.500 8Z")}
        ${p("Previous", "M11 2V14L1 8ZM12.500 5H14.500V11H12.500z")}
        ${p("Play", "M2 0V16L15 8Z")}
        ${p("Next", "M5 2V14L15 8ZM1.500 5H3.500V11H1.500z")}
        ${p("Last", "M2 2V14L11.500 8ZM12 2H14V14H12z")}
      </div>
      <ol class="track">${this.items.map((k) => html`<li class="step"><button aria-label=${k}>${timelineIcons[k]}</button></li>`)}</ol>
      <svg class="marker" viewBox="0 0 14 35" width="14" height="35"><path d="M0 0H14V4L8.500 9.500V35H5.500V9.500L0 4Z" fill="#555" /></svg>
      <button class="settings" aria-label="Timeline settings">${gearIcon}</button>`;
  }
}

/* ================= application window ================= */
@customElement("app-root")
class AppRoot extends LitElement {
  static styles = [resets, css`
    :host { display: block; background: #26221c; padding-top: 2px; font-family: "Noto Sans", sans-serif; font-size: 13px; }
    .window { display: flex; flex-direction: column; min-height: calc(100vh - 2px); border-radius: 12px; overflow: hidden; background: #fff; }
    .work { position: relative; flex: 1; display: grid; grid-template-columns: 1fr auto 1fr; padding: 2px 5px 6px; border-top: 2px solid #f6f6f6; min-height: 560px; }
    .canvas { position: absolute; inset: 0; }
    .left, .right, .nav, .entry { z-index: 1; }
    .left { display: flex; }
    .nav { display: flex; align-self: end; height: 27px; padding-left: 4px; background: #f1f1f1; }
    .nav button { justify-content: flex-start; width: 29px; gap: 4px; color: #333; }
    .nav .caret { width: 7px; height: 5px; }
    .nav .menu { width: 35px; }
    .nav .menu:first-child { width: 37px; }
    .nav .menu:last-child { width: 31px; }
    .right { display: flex; flex-direction: column; align-items: flex-end; }
    .cube { margin: 10px 17px 13px; }
    .axis { font: 14px "Open Sans", sans-serif; }
    .side { font: 600 11px "Open Sans", sans-serif; fill: #8d9298; }
    .status { display: flex; align-items: center; margin-top: auto; padding-right: 9px; font-weight: 600; color: #222; }
    .status svg { margin-left: 13px; }
    .status .warn { margin-left: 16px; }
    .entry { position: absolute; left: calc(50% + 14px); top: 463px; display: flex; align-items: center; width: 129px; height: 26px; background: #f1f1f1; }
    .grip { width: 10px; height: 22px; margin: 0 5px 0 1px; border-right: 1px solid #ccc; background: repeating-linear-gradient(135deg, transparent 0 2px, #ddd 2px 3px); }
    .entry input { width: 88px; height: 23px; background: linear-gradient(#222, #222) calc(50% + 4px) 50% / 1px 14px no-repeat, #fff; border: 1px solid #bbb; text-align: center; font-size: 13px; color: #333; }
    .entry button { width: 22px; margin-left: 1px; }
  `];
  render() {
    return html`
      <div class="window">
        <document-bar></document-bar>
        <tool-ribbon></tool-ribbon>
        <main class="work">
          <model-canvas class="canvas"></model-canvas>
          <div class="left"><model-browser></model-browser></div>
          <div class="nav">${navTools.map((t) => html`<button class=${classMap({ menu: !!t.menu })} aria-label=${t.name}>${t.icon}${t.menu ? caret : nothing}</button>`)}</div>
          <div class="right">
            <svg class="cube" viewBox="0 -6 70 90" width="70" height="90" aria-label="View cube">
              <defs><filter id="s" x="-20%" y="-100%" width="140%" height="300%"><feGaussianBlur stdDeviation="3" /></filter></defs>
              <ellipse cx="40" cy="67" rx="27" ry="5" fill="#999" filter="url(#s)" />
              <path d="M15 13V20" stroke="#8c8cf0" /><text class="axis" x="11" y="12" fill="#7c7cf0">Z</text>
              <path d="M8 20 58 21 57 69 8 67Z" fill="#e6e7e8" stroke="#d4d4d4" stroke-dasharray="8 2" />
              <path d="M17 29H49V59H17z" fill="#dcdfe1" />
              <text class="side" x="17" y="48">RIGHT</text>
              <text class="axis" x="1" y="77" fill="#f07070">X</text>
              <text class="axis" x="60" y="66" fill="#5ee07a">Y</text>
            </svg>
            <offset-panel></offset-panel>
            <div class="status">Face
              <svg class="warn" viewBox="0 0 18 17" width="18" height="17"><path d="M9 1 17.500 16H.500Z" fill="#fcd116" stroke="#5b4a00" stroke-linejoin="round" /><path d="M9 5V11M9 12.500V14.500" stroke="#222" stroke-width="1.800" /></svg>
              <svg viewBox="0 0 17 17" width="17" height="17"><path d="M8.500 0A8.500 8.500 0 1 0 8.500 17H17V8.500A8.500 8.500 0 0 0 8.500 0Z" fill="#000" /><path d="M3 11 7 7H10L14 4M5 12 9 9.500 14 7M9 12.500 14 10" fill="none" stroke="#fff" stroke-width="1.200" /></svg>
            </div>
          </div>
          <div class="entry"><span class="grip"></span><input aria-label="Offset distance" value="1" /><button aria-label="More"><svg viewBox="0 0 4 14" width="4" height="14"><g fill="#777"><circle cx="2" cy="2" r="1.500" /><circle cx="2" cy="7" r="1.500" /><circle cx="2" cy="12" r="1.500" /></g></svg></button></div>
        </main>
        <feature-timeline></feature-timeline>
      </div>`;
  }
}
